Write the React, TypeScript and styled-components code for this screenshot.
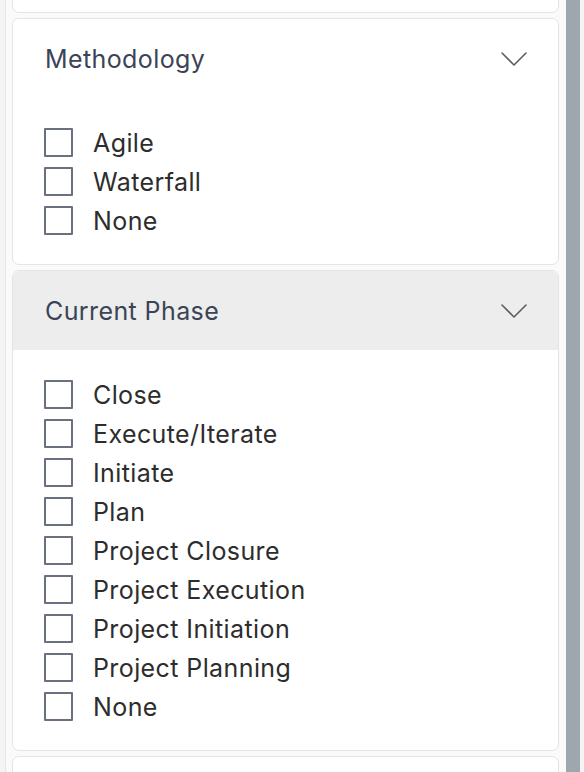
import React from "react";
import styled, { createGlobalStyle } from "styled-components";

const Global = createGlobalStyle`
  html, body { margin: 0; padding: 0; background: #f5f5f5; }
  body { font-family: Inter, "Noto Sans", "Liberation Sans", sans-serif; }
  #root { height: 772px; overflow: hidden; }
`;

const Frame = styled.div`
  display: flex;
  height: 772px;
  overflow: hidden;
`;

const Rail = styled.div`
  width: 5px;
  flex: none;
  background: #f4f4f4;
  border-right: 1px solid #e6e6e6;
`;

const Scroller = styled.div`
  flex: 1;
  background: #fafafa;
  padding: 0 7px 0 6px;
  overflow: hidden;
`;

const Stack = styled.div`
  display: flex;
  flex-direction: column;
  gap: 5px;
  margin-top: -39px;
`;

const Card = styled.section<{ $stub?: boolean }>`
  background: #ffffff;
  border: 1px solid #e3e4e8;
  border-radius: 7px;
  overflow: hidden;
  ${(p) => (p.$stub ? "height: 50px;" : "")}
`;

const Header = styled.div<{ $active?: boolean }>`
  height: 79px;
  display: flex;
  align-items: center;
  justify-content: space-between;
  padding: 0 31px 0 32px;
  background: ${(p) => (p.$active ? "#ededed" : "#ffffff")};
  box-sizing: border-box;
`;

const Title = styled.span`
  font-size: 25px;
  color: #3b4457;
  letter-spacing: 0.4px;
  margin-top: 1px;
`;

const Chevron = styled.svg`
  width: 26px;
  height: 14px;
  flex: none;
`;

const Options = styled.div`
  display: flex;
  flex-direction: column;
  gap: 10px;
  padding: 30px 31px 29px 31px;
`;

const Option = styled.label`
  display: flex;
  align-items: center;
  gap: 20px;
  height: 29px;
  cursor: pointer;
`;

const Box = styled.span`
  width: 29px;
  height: 29px;
  box-sizing: border-box;
  border: 2px solid #6b7080;
  border-radius: 1px;
  flex: none;
  background: #fff;
`;

const Label = styled.span`
  font-size: 25px;
  letter-spacing: 0.4px;
  color: #2d2d2d;
  line-height: 29px;
  margin-top: 1px;
`;

const Track = styled.div`
  width: 18px;
  flex: none;
  background: #f4f4f4;
  display: flex;
`;

const Thumb = styled.div`
  width: 14px;
  background: #9ea6ae;
`;

function ChevronDown() {
  return (
    <Chevron viewBox="0 0 26 14" fill="none">
      <polyline
        points="1,1 13,13 25,1"
        stroke="#5f5f63"
        strokeWidth="1.6"
        strokeLinecap="round"
        strokeLinejoin="round"
      />
    </Chevron>
  );
}

type GroupProps = { title: string; options: string[]; active?: boolean };

function FilterGroup({ title, options, active }: GroupProps) {
  return (
    <Card>
      <Header $active={active}>
        <Title>{title}</Title>
        <ChevronDown />
      </Header>
      <Options>
        {options.map((o) => (
          <Option key={o}>
            <Box />
            <Label>{o}</Label>
          </Option>
        ))}
      </Options>
    </Card>
  );
}

export default function App() {
  return (
    <>
      <Global />
      <Frame>
        <Rail />
        <Scroller>
          <Stack>
            <Card $stub />
            <FilterGroup title="Methodology" options={["Agile", "Waterfall", "None"]} />
            <FilterGroup
              title="Current Phase"
              active
              options={[
                "Close",
                "Execute/Iterate",
                "Initiate",
                "Plan",
                "Project Closure",
                "Project Execution",
                "Project Initiation",
                "Project Planning",
                "None",
              ]}
            />
            <Card $stub />
          </Stack>
        </Scroller>
        <Track>
          <Thumb />
        </Track>
      </Frame>
    </>
  );
}
